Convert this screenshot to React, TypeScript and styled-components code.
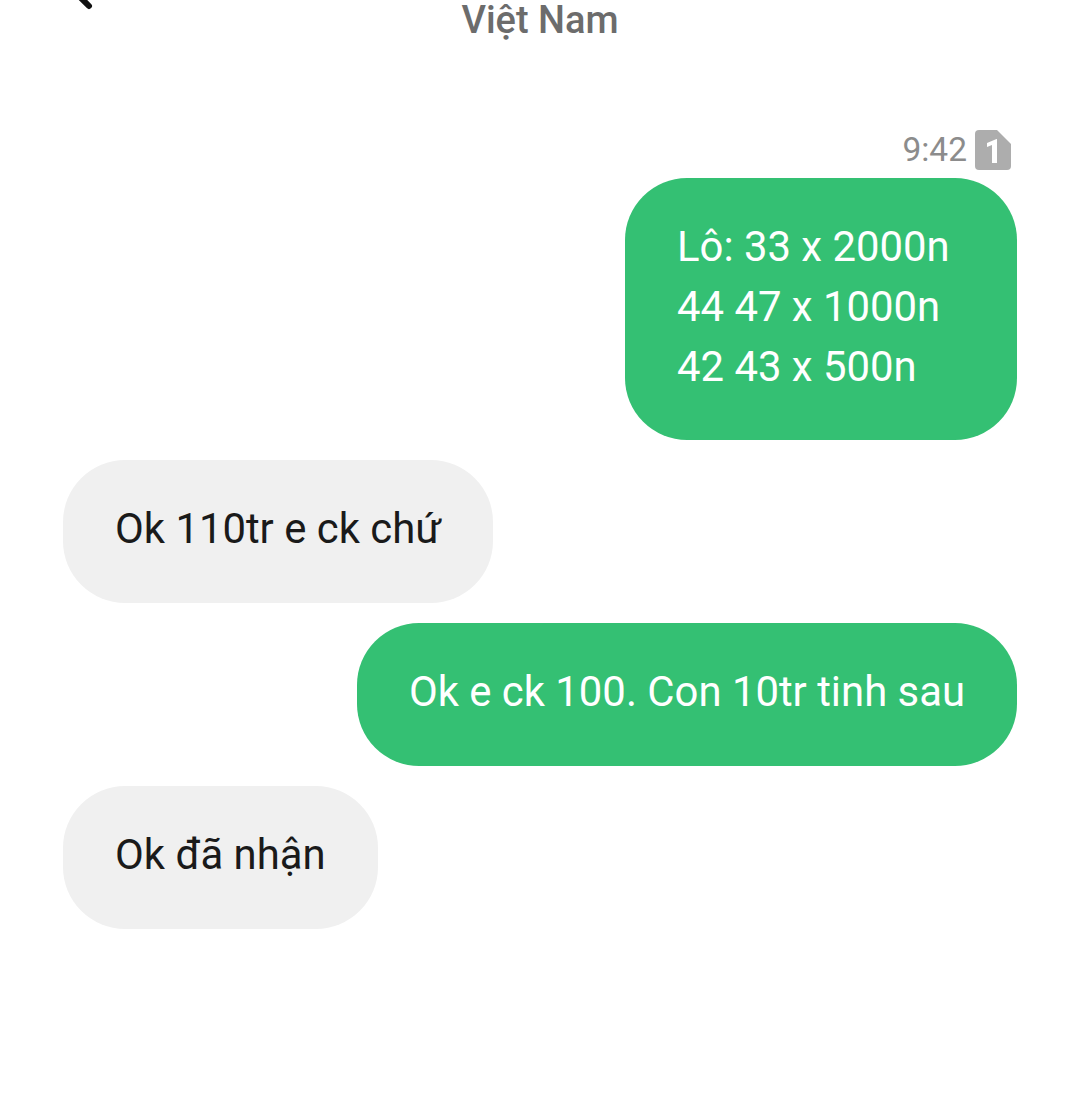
import styled, { createGlobalStyle } from "styled-components";

const GlobalStyle = createGlobalStyle`
  html, body {
    margin: 0;
    padding: 0;
    background: #fff;
    font-family: Roboto, "Noto Sans", sans-serif;
  }
`;

const Screen = styled.div`
  width: 1080px;
  height: 1098px;
  overflow: hidden;
  position: relative;
  background: #fff;
`;

const Header = styled.header`
  height: 129px;
  display: flex;
  justify-content: center;
`;

const Title = styled.h1`
  margin: 0;
  height: 40px;
  font-size: 38px;
  line-height: 40px;
  font-weight: 500;
  color: #6c6c6c;
`;

const BackIcon = styled.svg`
  position: absolute;
  left: 70px;
  top: -30px;
`;

const Thread = styled.main`
  display: flex;
  flex-direction: column;
  gap: 20px;
  padding: 0 63px;
`;

const Meta = styled.div`
  display: flex;
  justify-content: flex-end;
  align-items: center;
  gap: 8px;
  height: 41px;
  margin-bottom: -12px;
  padding-right: 6px;
  font-size: 33.5px;
  color: #8c8c8c;
`;

const Bubble = styled.div<{ $sent?: boolean; $minWidth?: number }>`
  align-self: ${(p) => (p.$sent ? "flex-end" : "flex-start")};
  background: ${(p) => (p.$sent ? "#34c073" : "#f0f0f0")};
  color: ${(p) => (p.$sent ? "#fff" : "#1a1a1a")};
  box-sizing: border-box;
  min-width: ${(p) => p.$minWidth ?? 0}px;
  min-height: 143px;
  padding: 39px 52px 43px;
  border-radius: 62px;
  font-size: 41.85px;
  line-height: 60px;
  white-space: pre;
`;

function SimIcon() {
  return (
    <svg width="36" height="40" viewBox="0 0 36 40">
      <path
        d="M4 0H22L36 14V36a4 4 0 0 1-4 4H4a4 4 0 0 1-4-4V4a4 4 0 0 1 4-4Z"
        fill="#adadad"
      />
      <path d="M22 9V33H17V15L12 17V13L21.500 9Z" fill="#fff" />
    </svg>
  );
}

export default function App() {
  return (
    <Screen>
      <GlobalStyle />
      <BackIcon width="60" height="60" viewBox="0 0 60 60">
        <path
          d="M27 0 5 22 19 36"
          fill="none"
          stroke="#111"
          strokeWidth="6"
          strokeLinecap="round"
          strokeLinejoin="round"
        />
      </BackIcon>
      <Header>
        <Title>Việt Nam</Title>
      </Header>
      <Thread>
        <Meta>
          9:42
          <SimIcon />
        </Meta>
        <Bubble $sent $minWidth={392}>
          {"Lô: 33 x 2000n\n44 47 x 1000n\n42 43 x 500n"}
        </Bubble>
        <Bubble>Ok 110tr e ck chứ</Bubble>
        <Bubble $sent>Ok e ck 100. Con 10tr tinh sau</Bubble>
        <Bubble>Ok đã nhận</Bubble>
      </Thread>
    </Screen>
  );
}
